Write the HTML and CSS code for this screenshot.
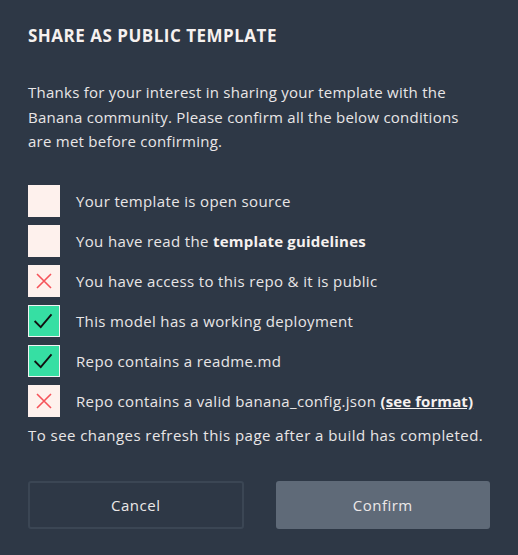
FILE: index.html
```html
<!DOCTYPE html>
<html>
<head>
<meta charset="utf-8">
<link rel="stylesheet" href="styles.css">
</head>
<body>
<div class="modal">
  <h1 class="title">SHARE AS PUBLIC TEMPLATE</h1>
  <p class="intro">Thanks for your interest in sharing your template with the Banana community. Please confirm all the below conditions are met before confirming.</p>
  <ul class="checks">
    <li class="row"><span class="box empty"></span><span class="label">Your template is open source</span></li>
    <li class="row"><span class="box empty"></span><span class="label">You have read the <b>template guidelines</b></span></li>
    <li class="row"><span class="box fail"><svg viewBox="0 0 32 32" width="32" height="32"><path d="M9 9 L23 23 M23 9 L9 23" stroke="#f5535a" stroke-width="1.6" fill="none"/></svg></span><span class="label">You have access to this repo &amp; it is public</span></li>
    <li class="row"><span class="box ok"><svg viewBox="0 0 32 32" width="30" height="30"><path d="M6 16 L12.5 22.5 L24 9" stroke="#111" stroke-width="2" fill="none"/></svg></span><span class="label">This model has a working deployment</span></li>
    <li class="row"><span class="box ok"><svg viewBox="0 0 32 32" width="30" height="30"><path d="M6 16 L12.5 22.5 L24 9" stroke="#111" stroke-width="2" fill="none"/></svg></span><span class="label">Repo contains a readme.md</span></li>
    <li class="row"><span class="box fail"><svg viewBox="0 0 32 32" width="32" height="32"><path d="M9 9 L23 23 M23 9 L9 23" stroke="#f5535a" stroke-width="1.6" fill="none"/></svg></span><span class="label">Repo contains a valid banana_config.json <a class="link" href="#">(see format)</a></span></li>
  </ul>
  <p class="note">To see changes refresh this page after a build has completed.</p>
  <div class="actions">
    <button class="btn cancel">Cancel</button>
    <button class="btn confirm">Confirm</button>
  </div>
</div>
</body>
</html>
```
FILE: styles.css
```css
html, body {
  margin: 0;
  padding: 0;
  background: #2e3846;
}
body {
  font-family: "Open Sans", Lato, sans-serif;
  color: #e9e6e6;
}
.modal {
  width: 518px;
  height: 555px;
  box-sizing: border-box;
  padding: 26px 28px 0 28px;
}
.title {
  margin: 0;
  font-size: 17px;
  font-weight: 700;
  color: #f6f1ef;
  line-height: 20px;
  letter-spacing: 0.5px;
}
.intro {
  margin: 34px 0 0 0;
  font-size: 15px;
  line-height: 24.5px;
  width: 452px;
  letter-spacing: 0.25px;
}
.checks {
  list-style: none;
  margin: 31px 0 0 0;
  padding: 0;
  display: flex;
  flex-direction: column;
  gap: 8px;
}
.row {
  display: flex;
  align-items: center;
  height: 32px;
}
.box {
  width: 32px;
  height: 32px;
  box-sizing: border-box;
  flex: none;
  margin-right: 16px;
  display: flex;
  align-items: center;
  justify-content: center;
}
.box.empty, .box.fail {
  background: #fef1ed;
}
.box.ok {
  background: #36dfa3;
  border: 1px solid #f2f2f2;
}
.label {
  font-size: 15px;
  letter-spacing: 0.35px;
}
.label b {
  font-weight: 700;
  color: #f6f1ef;
  letter-spacing: 0.2px;
}
.link {
  color: #f6f1ef;
  font-weight: 700;
  text-decoration: underline;
  letter-spacing: 0.1px;
}
.note {
  margin: 8px 0 0 0;
  font-size: 15px;
  line-height: 20px;
  letter-spacing: 0.45px;
}
.actions {
  margin-top: 36px;
  display: flex;
  gap: 32px;
}
.btn {
  width: 216px;
  height: 48px;
  border-radius: 3px;
  font-family: inherit;
  font-size: 15px;
  color: #ece8e8;
  letter-spacing: 0.5px;
}
.cancel {
  background: transparent;
  border: 2px solid #3b4654;
}
.confirm {
  background: #5f6a78;
  border: none;
  width: 215px;
}
```
